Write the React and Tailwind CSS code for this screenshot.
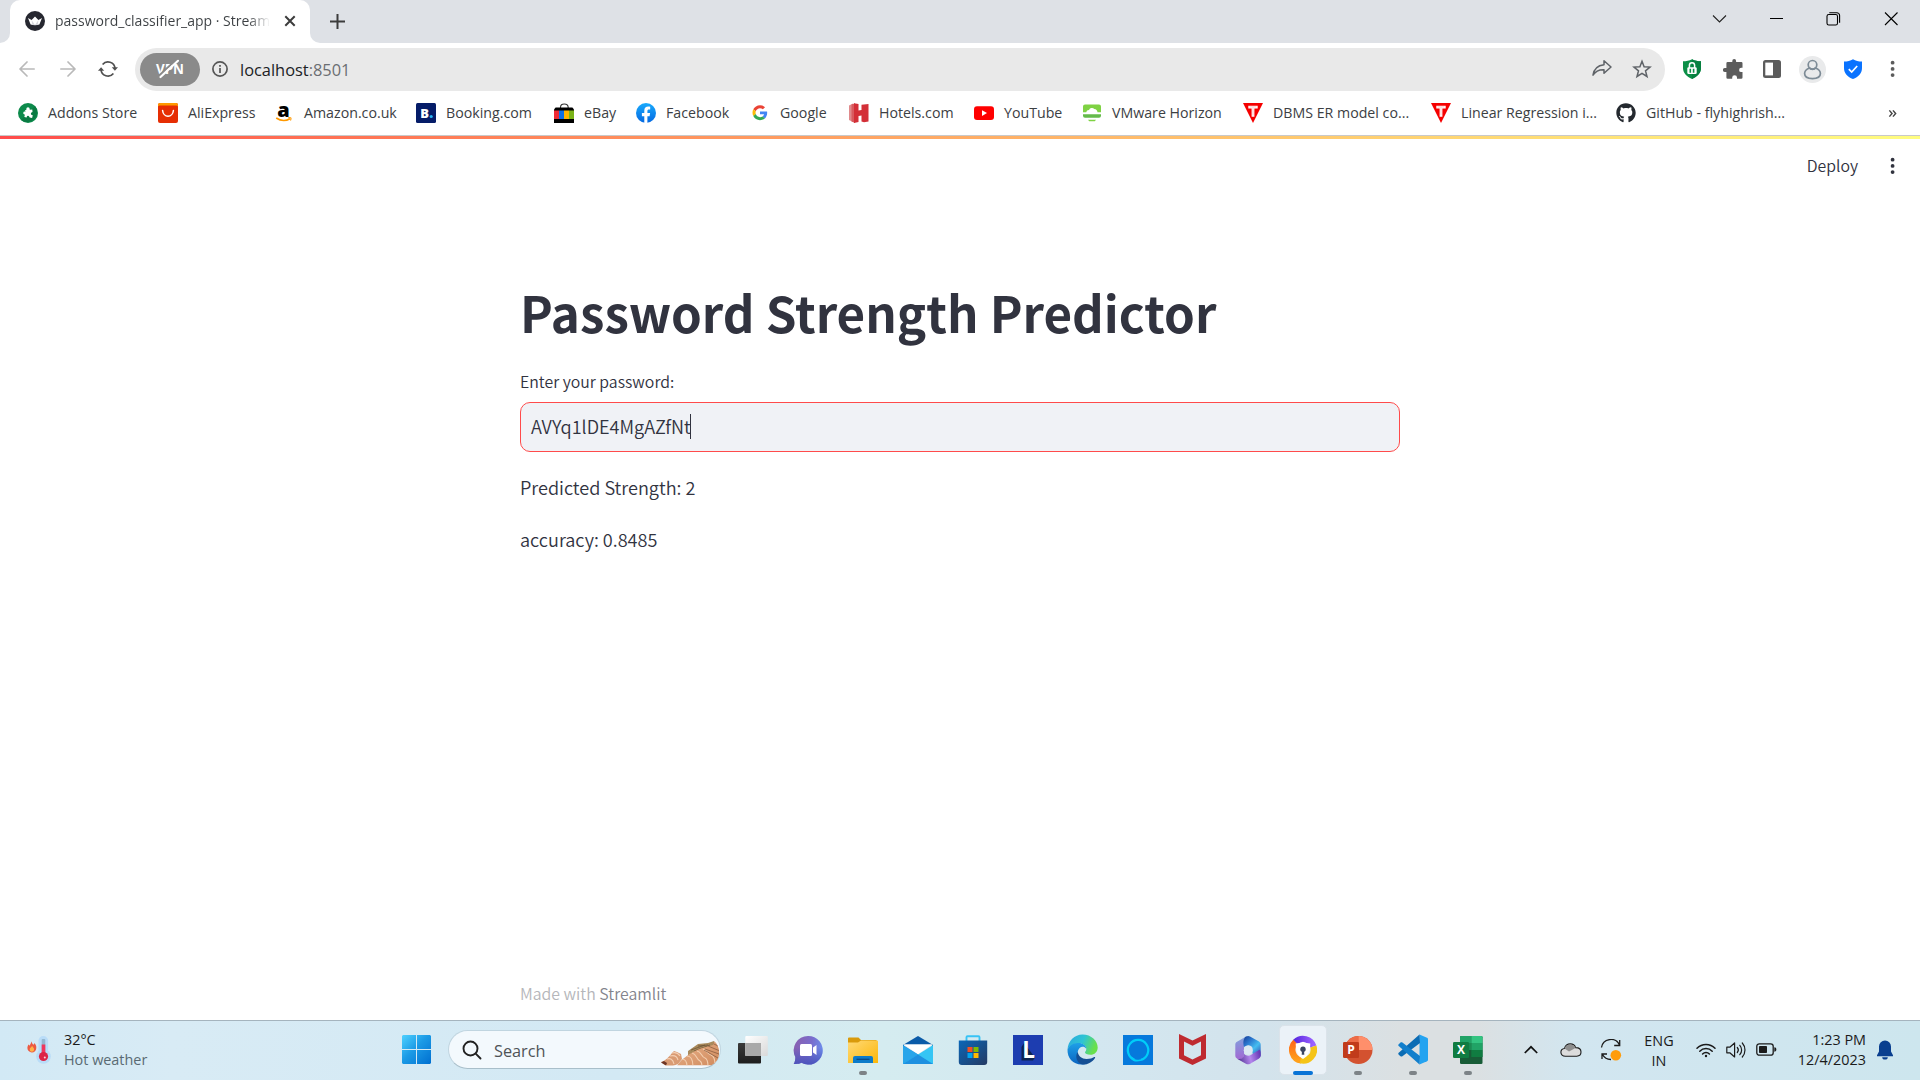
import React from "react";
import { FaGithub } from "react-icons/fa";

/* ---------- browser icons ---------- */

const CrownFavicon = () => (
  <svg className="h-5 w-5 shrink-0" viewBox="0 0 20 20">
    <circle cx="10" cy="10" r="10" fill="#262730" />
    <path d="M3 7l3.6 2L10 5.4 13.4 9 17 7l-2.6 6.6c-2.9.9-5.9.9-8.8 0z" fill="#fff" />
    <path d="M6.6 9 10 13.9 13.4 9l-.6 5.1H7.2z" fill="#d8d8de" />
  </svg>
);

const Arrow = ({ flip }) => (
  <svg className={flip ? "h-4 w-4 rotate-180" : "h-4 w-4"} viewBox="0 0 16 16" fill="none" stroke="#b9b9b9" strokeWidth="1.7" strokeLinecap="round" strokeLinejoin="round">
    <path d="M15.2 8H1.2M8 1 1 8l7 7" />
  </svg>
);

const Reload = () => (
  <svg className="h-5 w-5" viewBox="0 0 20 20" fill="none" stroke="#505050" strokeWidth="1.7">
    <path d="M4.600 5.500A7 7 0 0 1 17 9.500" />
    <path d="M15.400 14.500A7 7 0 0 1 3 10.500" />
    <path d="M13.800 8.300h6.200l-3.100 3.500z" fill="#505050" stroke="none" />
    <path d="M0 11.700h6.200L3.100 8.200z" fill="#505050" stroke="none" />
  </svg>
);

const VpnOff = () => (
  <svg className="h-5 w-[30px] overflow-visible" viewBox="0 0 30 20">
    <text x="15" y="15.400" textAnchor="middle" fontFamily="Open Sans, sans-serif" fontWeight="700" fontSize="14" textLength="28" lengthAdjust="spacingAndGlyphs" fill="#fff">VPN</text>
    <path d="M4.200 16.600 21.500.6" stroke="#8a8a8a" strokeWidth="2" />
    <path d="M5.500 18 23 1.800" stroke="#fff" strokeWidth="2.200" strokeLinecap="round" />
  </svg>
);

const Info = () => (
  <svg className="h-4 w-4" viewBox="0 0 16 16" fill="none" stroke="#555" strokeWidth="1.7">
    <circle cx="8" cy="8" r="7.1" />
    <path d="M8 7v5M8 4v1.8" />
  </svg>
);

const Share = () => (
  <svg className="h-5 w-5" viewBox="0 0 20 20" fill="none" stroke="#5f6368" strokeWidth="1.5" strokeLinejoin="round">
    <path d="M12 1.800 19 8l-7 6.200v-3.500C7 10.500 3.500 12 1 16.200 1.800 10.500 5.300 6.400 12 5.700z" />
  </svg>
);

const Star = () => (
  <svg className="h-5 w-5" viewBox="0 0 20 20" fill="none" stroke="#5f6368" strokeWidth="1.5" strokeLinejoin="miter">
    <path d="M10 2.3l2.1 5.4 5.900.4-4.500 3.700 1.500 5.700-5-3.200-5 3.200 1.500-5.700L2 8.100l5.900-.4z" />
  </svg>
);

const LockShield = () => (
  <svg className="h-5 w-5" viewBox="0 0 20 20">
    <path d="M10 .3c2.700 1.500 5.700 2 9 2V9c0 5-3.700 8.800-9 11C4.700 17.800 1 14 1 9V2.300c3.300 0 6.300-.5 9-2z" fill="#0b8f47" />
    <path d="M10 .3c2.700 1.500 5.700 2 9 2V9c0 5-3.700 8.800-9 11z" fill="#078040" />
    <path d="M7.400 9V6.300a2.600 2.600 0 0 1 5.200 0V9" fill="none" stroke="#fff" strokeWidth="1.500" />
    <rect x="5.300" y="8.300" width="9.400" height="6.700" rx="1.200" fill="#fff" />
    <path d="M7.500 9.700h1.600v4H7.500zM10.800 9.700h1.600v4h-1.600z" fill="#0b8f47" />
  </svg>
);

const Puzzle = () => (
  <svg className="h-5 w-5" viewBox="0 0 20 20" fill="#5c5c5c">
    <path d="M9.300 3V2a1.900 1.900 0 0 1 3.800 0v1h5.200a1.200 1.200 0 0 1 1.200 1.200v4.500h-1.200a2.200 2.200 0 0 0 0 4.400h1.200v5.400a1.300 1.300 0 0 1-1.300 1.300H14v-1.200a2.400 2.400 0 0 0-4.800 0v1.200H4.700a1.300 1.300 0 0 1-1.300-1.300V13.100H2a2.100 2.100 0 0 1 0-4.200h1.400V4.200A1.200 1.200 0 0 1 4.600 3z" />
  </svg>
);

const SidePanel = () => (
  <svg className="h-[18px] w-[18px]" viewBox="0 0 18 18">
    <rect width="18" height="18" rx="2.500" fill="#5c5c5c" />
    <rect x="2.300" y="2.600" width="7.700" height="12.800" fill="#fff" />
  </svg>
);

const Avatar = () => (
  <svg className="h-[27px] w-[27px]" viewBox="0 0 27 27">
    <circle cx="13.500" cy="13.500" r="13.500" fill="#e9eaeb" />
    <g fill="none" stroke="#7d8b96" strokeWidth="1.700">
      <circle cx="13.500" cy="8.800" r="4.300" />
      <path d="M10.300 12C7 13.400 5.600 15.300 5.600 17.600c0 3.200 3.300 5 7.900 5s7.900-1.800 7.900-5c0-2.300-1.400-4.200-4.700-5.600" />
      <path d="M10.300 12c2 1.600 4.400 1.600 6.400 0" />
    </g>
  </svg>
);

const CheckShield = () => (
  <svg className="h-5 w-[18px]" viewBox="0 0 18 20">
    <path d="M9 .2c2.600 1.500 5.600 2.200 9 2.400V9c0 5.300-3.600 9-9 11-5.400-2-9-5.700-9-11V2.600C3.400 2.400 6.400 1.700 9 .2z" fill="#0a73ff" />
    <path d="M4.800 10.200 7.700 13l5.500-6" fill="none" stroke="#fff" strokeWidth="1.700" />
  </svg>
);

const Dots = ({ color = "#5c5c5c" }) => (
  <svg className="h-5 w-5" viewBox="0 0 20 20" fill={color}>
    <circle cx="9.600" cy="3.700" r="1.900" />
    <circle cx="9.600" cy="9.900" r="1.900" />
    <circle cx="9.600" cy="16.100" r="1.900" />
  </svg>
);

/* ---------- bookmark icons ---------- */

const AddonsIcon = () => (
  <svg className="h-5 w-5" viewBox="0 0 20 20">
    <circle cx="10" cy="10" r="10" fill="#0c8a4b" />
    <path d="M3 17 17 3a10 10 0 0 1-14 14z" fill="#0a7a42" />
    <path d="M8.300 7V6a1.700 1.700 0 0 1 3.400 0v.8l2.600-.3.200 2.500-1 .6a1.300 1.300 0 0 0 .2 2.300l1.100.4-.7 2.600-2.400-.5-.6-1a1.200 1.200 0 0 0-2.200.2l-.3 1-2.300-.6.6-2.200-.9-.5a1.500 1.500 0 0 1 .6-2.800h1L7 7z" fill="#fff" />
  </svg>
);
const AliIcon = () => (
  <svg className="h-5 w-5" viewBox="0 0 20 20">
    <rect width="20" height="20" rx="2" fill="#e62e04" />
    <path d="M2 0h16a2 2 0 0 1 2 2v1.600a2 2 0 0 0-2-1H2a2 2 0 0 0-2 1V2a2 2 0 0 1 2-2z" fill="#ff9a00" />
    <path d="M4.600 7.500c.3 3.300 2.600 5.700 5.400 5.700s5.100-2.400 5.400-5.700" fill="none" stroke="#fff" strokeWidth="1.500" strokeLinecap="round" />
  </svg>
);
const AmazonIcon = () => (
  <svg className="h-5 w-5 overflow-visible" viewBox="0 0 20 20">
    <text x="9.600" y="13.800" textAnchor="middle" fontFamily="Open Sans, sans-serif" fontWeight="800" fontSize="20" fill="#000">a</text>
    <path d="M2.200 15c4.500 2.900 9.500 3.100 13.800.7" fill="none" stroke="#f90" strokeWidth="1.600" />
    <path d="M14.200 14.800c2.600-.6 3.600 0 2.300 2.800" fill="none" stroke="#f90" strokeWidth="1.100" />
  </svg>
);
const BookingIcon = () => (
  <svg className="h-5 w-5" viewBox="0 0 20 20">
    <rect width="20" height="20" rx="1.500" fill="#051c68" />
    <text x="4.300" y="14.800" fontFamily="Open Sans, sans-serif" fontWeight="800" fontSize="13" fill="#fff">B</text>
    <circle cx="15.200" cy="13.500" r="1.600" fill="#27b4f2" />
  </svg>
);
const EbayIcon = () => (
  <svg className="h-5 w-5" viewBox="0 0 20 20">
    <path d="M6.500 6V4.500C6.500 1.800 8 1 10.200 1s4 .9 4 3.500V6" fill="none" stroke="#333" strokeWidth="1.100" />
    <path d="M1.600 4.500h16.800L20 6.500V20H0V6.500z" fill="#000" />
    <path d="M0 7.500h5V16H0z" fill="#ee2a35" />
    <path d="M5 7.500h5V16H5z" fill="#0d6fe8" />
    <path d="M10 7.500h5V16h-5z" fill="#ffb400" />
    <path d="M15 7.500h5V16h-5z" fill="#7ab317" />
  </svg>
);
const FacebookIcon = () => (
  <svg className="h-5 w-5" viewBox="0 0 20 20">
    <defs>
      <linearGradient id="fb" x1="0" y1="0" x2="0" y2="1">
        <stop offset="0" stopColor="#19aafc" />
        <stop offset="1" stopColor="#0568e1" />
      </linearGradient>
    </defs>
    <circle cx="10" cy="10" r="10" fill="url(#fb)" />
    <path d="M8.300 20v-6.800H5.900V10h2.400V7.800c0-2.800 1.500-4.200 4-4.200.7 0 1.300.1 1.900.2v2.700h-1.300c-1.100 0-1.500.6-1.500 1.500v2h2.700l-.5 3.200h-2.200V20z" fill="#fff" />
  </svg>
);
const GoogleIcon = () => (
  <svg className="h-5 w-5" viewBox="-8 -7 64 64">
    <path fill="#EA4335" d="M24 9.500c3.540 0 6.710 1.220 9.210 3.600l6.850-6.850C35.900 2.380 30.470 0 24 0 14.620 0 6.510 5.380 2.560 13.220l7.980 6.190C12.430 13.720 17.740 9.500 24 9.500z" />
    <path fill="#4285F4" d="M46.980 24.550c0-1.570-.15-3.090-.38-4.550H24v9.020h12.940c-.58 2.960-2.260 5.480-4.780 7.180l7.730 6c4.510-4.180 7.090-10.360 7.090-17.650z" />
    <path fill="#FBBC05" d="M10.530 28.590c-.48-1.450-.76-2.990-.76-4.590s.27-3.140.76-4.590l-7.980-6.190C.92 16.460 0 20.120 0 24c0 3.880.92 7.540 2.560 10.780l7.970-6.190z" />
    <path fill="#34A853" d="M24 48c6.480 0 11.930-2.130 15.890-5.810l-7.730-6c-2.150 1.450-4.920 2.300-8.160 2.300-6.260 0-11.570-4.220-13.470-9.910l-7.980 6.190C6.510 42.620 14.620 48 24 48z" />
  </svg>
);
const HotelsIcon = () => (
  <svg className="h-5 w-5" viewBox="0 0 20 20">
    <path d="M0 2.500 4 .5v18.500l-4-2z" fill="#e08a8c" />
    <path d="M2.500 1.500 6 .3V20l-3.500-1.500z" fill="#d95a5e" />
    <path d="M5 .3 9.500 1v6.500l3-.5V1.800L19.500 1v17.500l-4.500.7-2.500-.8V12.500L9.500 13v6L5 20z" fill="#d32f37" />
  </svg>
);
const YoutubeIcon = () => (
  <svg className="h-5 w-5" viewBox="0 0 20 20">
    <rect y="3.200" width="20" height="13.800" rx="3" fill="#f00" />
    <path d="M8 7.200v5.800l5-2.900z" fill="#fff" />
  </svg>
);
const HorizonIcon = () => (
  <svg className="h-5 w-5" viewBox="0 0 20 20">
    <path d="M3 1.400h14a2 2 0 0 1 2 2V9.200h-3.500A3.600 3.600 0 0 0 12.300 6a3.300 3.300 0 0 0-5.300.9A2.800 2.800 0 0 0 4.200 9.200H1V3.400a2 2 0 0 1 2-2z" fill="#7fd243" />
    <path d="M1 11.300h18v1.500a2 2 0 0 1-2 2H3a2 2 0 0 1-2-2z" fill="#64ba4a" />
    <path d="M6 16.700h8l-1.200 1.600H7.200z" fill="#7fd243" />
  </svg>
);
const TriangleIcon = () => (
  <svg className="h-5 w-5" viewBox="0 0 20 20">
    <path d="M0 0h20L10 20z" fill="#f50000" />
    <path d="M5.300 2.800h9.400v2.600h-3.300v8.300H8.600V5.400H5.300z" fill="#fff" />
    <path d="M6.600 3.900h6.800M10 4.500v8" stroke="#ff8a8a" strokeWidth=".5" />
  </svg>
);

const bookmarks = [
  ["Addons Store", AddonsIcon],
  ["AliExpress", AliIcon],
  ["Amazon.co.uk", AmazonIcon],
  ["Booking.com", BookingIcon],
  ["eBay", EbayIcon],
  ["Facebook", FacebookIcon],
  ["Google", GoogleIcon],
  ["Hotels.com", HotelsIcon],
  ["YouTube", YoutubeIcon],
  ["VMware Horizon", HorizonIcon],
  ["DBMS ER model co...", TriangleIcon],
  ["Linear Regression i...", TriangleIcon],
  ["GitHub - flyhighrish...", () => <FaGithub className="h-5 w-5 text-[#24292f]" />],
];

/* ---------- taskbar icons ---------- */

const WeatherIcon = () => (
  <svg className="h-[30px] w-[26px]" viewBox="0 0 26 30">
    <rect x="11.500" y="1" width="9.600" height="22" rx="4.800" fill="#b9dcf8" />
    <circle cx="16.500" cy="21.500" r="7.300" fill="#b9dcf8" />
    <rect x="14.700" y="4" width="3.600" height="14" rx="1" fill="#93b6cf" />
    <rect x="14.700" y="9.500" width="3.600" height="10" fill="#f0365c" />
    <circle cx="16.500" cy="21.500" r="4.600" fill="#dc2346" />
    <circle cx="17.800" cy="22.600" r="1" fill="#ffd0d8" />
    <path d="M4.400 6.200c.3 2.200 1.500 2.600 2 3.500.7-.5.800-1 .8-1.700 1.500 1.300 2.300 3 2.100 5A4.400 4.400 0 0 1 4.800 17.400 4.400 4.400 0 0 1 .4 13c0-1.600.7-2.400 1-3.500.5.300.8.700 1 1.200.9-1.200 1.800-2.600 2-4.500z" fill="#ec5a42" />
    <path d="M5.200 10.800c.3 1.400 1.900 2 1.900 3.700a2.200 2.200 0 0 1-4.400 0c0-1.500 1.300-1.800 2.500-3.700z" fill="#ffb347" />
  </svg>
);

const WindowsIcon = () => (
  <svg className="h-[29px] w-[29px]" viewBox="0 0 29 29">
    <defs>
      <linearGradient id="win" gradientUnits="userSpaceOnUse" x1="0" y1="0" x2="29" y2="29">
        <stop offset="0" stopColor="#4fd1ff" />
        <stop offset=".45" stopColor="#1c9be6" />
        <stop offset="1" stopColor="#006fd0" />
      </linearGradient>
    </defs>
    <path fill="url(#win)" d="M1 0h13v14H0V1zM15 0h13l1 1v13H15zM0 15h14v14H1l-1-1zM15 15h14v13l-1 1H15z" />
  </svg>
);

const Shell = () => (
  <svg className="h-[28px] w-[60px]" viewBox="0 0 60 28">
    <defs>
      <clipPath id="pill"><path d="M0 0h42a14 14 0 0 1 17 14 13 13 0 0 1-8 13.500H0z" /></clipPath>
      <linearGradient id="shell" x1="0" y1="0" x2="1" y2="1">
        <stop offset="0" stopColor="#e9b48e" />
        <stop offset="1" stopColor="#d08a5c" />
      </linearGradient>
      <clipPath id="body"><path d="M17 27.500C22 20 34 12 46 9l7-2 2-5 3 3 2 8-1 8-5 6.500z" /></clipPath>
    </defs>
    <g clipPath="url(#pill)">
      <path d="M28 13 38 6l10-1 6-2 2 4-14 6-14 5z" fill="#a88a5c" />
      <path d="M31 12l14-5M34 13l16-6M38 8l10-1" stroke="#6e5638" strokeWidth=".8" />
      <path d="M17 27.500C22 20 34 12 46 9l7-2 2-5 3 3 2 8-1 8-5 6.500z" fill="url(#shell)" />
      <g clipPath="url(#body)" fill="none" stroke="#f3cfb0" strokeWidth="1.100">
        <path d="M22 21c4 0 5 3 5 8M27 18c5 0 6 5 6 11M32 15c5 1 4 6 8 8 2 1 2 3 2 6M37 13c5 1 4 6 8 7 3 1 3 5 3 9M43 11c4 1 4 5 8 6 3 1 4 4 4 10" />
      </g>
      <g clipPath="url(#body)" stroke="#80553a" strokeWidth=".7">
        <path d="M45 11l14 5M48 8l12 5M44 12l14 8M52 5l8 4" />
      </g>
      <path d="M1 24c4-1 8-5 11-9l2-2 3 1 4 2 1 5-4 5-5 2H6z" fill="#d99b73" />
      <path d="M12 15c3-1 6 0 8 3M10 18c4-1 7 0 8 4M7 21c3-1 6 0 7 5" fill="none" stroke="#f4d0b4" strokeWidth="1.100" />
      <path d="M1 24.500 4 23l3 2-1 2.500z" fill="#6d3524" />
    </g>
  </svg>
);

const TaskViewIcon = () => (
  <svg className="h-[30px] w-[30px]" viewBox="0 0 30 30">
    <defs>
      <linearGradient id="tvd" x1="0" y1="0" x2="0" y2="1"><stop offset="0" stopColor="#3a3a3a" /><stop offset="1" stopColor="#1d1d1d" /></linearGradient>
      <linearGradient id="tvl" x1="0" y1="0" x2="1" y2="1"><stop offset="0" stopColor="#fff" /><stop offset="1" stopColor="#d9d9d9" /></linearGradient>
    </defs>
    <rect x="0" y="8" width="23" height="20.500" rx="1" fill="url(#tvd)" />
    <rect x="7.300" y="1" width="22.500" height="20" rx="1" fill="url(#tvl)" />
    <path d="M7.300 8H23v13H7.300z" fill="#a9a9a9" />
  </svg>
);

const ChatIcon = () => (
  <svg className="h-[30px] w-[30px]" viewBox="0 0 30 30">
    <defs>
      <linearGradient id="chat" x1="0" y1=".1" x2="1" y2=".3"><stop offset="0" stopColor="#8a5fae" /><stop offset=".6" stopColor="#7a6ccb" /><stop offset="1" stopColor="#6d8bea" /></linearGradient>
      <linearGradient id="chat2" x1="0" y1="0" x2="0" y2="1"><stop offset=".4" stopColor="#4b53bc" stopOpacity="0" /><stop offset="1" stopColor="#4b53bc" /></linearGradient>
    </defs>
    <path d="M15 1a14.300 14.300 0 1 1-6.500 26.800c-2 1-4.500 1.400-7.800 1.100C2 27 2.300 24.800 2.300 22A14.300 14.300 0 0 1 15 1z" fill="url(#chat)" />
    <path d="M15 1a14.300 14.300 0 1 1-6.500 26.800c-2 1-4.500 1.400-7.800 1.100C2 27 2.300 24.800 2.300 22A14.300 14.300 0 0 1 15 1z" fill="url(#chat2)" />
    <rect x="7" y="9" width="12" height="12" rx="1.500" fill="#fff" />
    <path d="M20 12.500 23.500 10v10L20 17.500z" fill="#fff" />
  </svg>
);

const ExplorerIcon = () => (
  <svg className="h-[30px] w-[30px]" viewBox="0 0 30 30">
    <defs><linearGradient id="fold" x1="0" y1="0" x2="1" y2="1"><stop offset="0" stopColor="#ffd977" /><stop offset="1" stopColor="#fbb708" /></linearGradient></defs>
    <path d="M0 3.500a1 1 0 0 1 1-1h9.500L13 5h15.500v5H0z" fill="#d99a0b" />
    <path d="M0 7.500h10L13 5.500h16a1 1 0 0 1 1 1V28H0z" fill="url(#fold)" />
    <path d="M5 28v-5a2 2 0 0 1 2-2h16a2 2 0 0 1 2 2v5z" fill="#0c7bc9" />
    <path d="M8.500 24.300h13" stroke="#094a85" strokeWidth="1.300" />
  </svg>
);

const MailIcon = () => (
  <svg className="h-[30px] w-[30px]" viewBox="0 0 30 30">
    <path d="M0 10 15 1l15 9v2H0z" fill="#0a5ba8" />
    <path d="M1 9.500h28v10H1z" fill="#efefef" />
    <path d="M1 9.500h28L15 19z" fill="#fff" />
    <path d="M0 10l15 9.500L30 29H0z" fill="#1b94e0" />
    <path d="M30 10 0 29h30z" fill="#35c5f4" />
    <path d="M15 19.500 30 29H0z" fill="#1a86dc" opacity=".85" />
    <path d="M0 10.500v18.500L15 19.500z" fill="#28a5ea" />
  </svg>
);

const StoreIcon = () => (
  <svg className="h-[30px] w-[30px]" viewBox="0 0 30 30">
    <defs><linearGradient id="store" x1="0" y1="0" x2="1" y2="1"><stop offset="0" stopColor="#0a67b8" /><stop offset="1" stopColor="#253a63" /></linearGradient></defs>
    <path d="M8.500 6V2.200a1 1 0 0 1 1-1h11a1 1 0 0 1 1 1V6" fill="none" stroke="#38c3f5" strokeWidth="1.900" />
    <path d="M.8 5.500h28.400V27a3 3 0 0 1-3 3H3.800a3 3 0 0 1-3-3z" fill="url(#store)" />
    <path d="M9.500 12h5v5h-5z" fill="#f25022" />
    <path d="M15.500 12h5v5h-5z" fill="#7fba00" />
    <path d="M9.500 18h5v5h-5z" fill="#00a4ef" />
    <path d="M15.500 18h5v5h-5z" fill="#ffb900" />
  </svg>
);

const LIcon = () => (
  <svg className="h-[30px] w-[30px] overflow-visible" viewBox="0 0 30 30">
    <path d="M0 0h30v30H0z" fill="#1d3db0" />
    <path d="M11 8 8.500 12v13.500H20l2-3z" fill="#0d2350" />
    <text x="9.300" y="22.500" fontFamily="Open Sans, sans-serif" fontWeight="700" fontSize="22.500" fill="#fff">L</text>
  </svg>
);

const EdgeIcon = () => (
  <svg className="h-[31px] w-[31px]" viewBox="0 0 31 31">
    <defs>
      <linearGradient id="e1" x1="0" y1="0" x2="1" y2=".3"><stop offset="0" stopColor="#2aa8e0" /><stop offset=".55" stopColor="#2fc4d4" /><stop offset="1" stopColor="#69e04c" /></linearGradient>
      <linearGradient id="e2" x1="0" y1="0" x2="0" y2="1"><stop offset="0" stopColor="#1ea0e8" /><stop offset="1" stopColor="#0b64c0" /></linearGradient>
    </defs>
    <path d="M.5 15.500C1 7 7.500.5 15.500.5 24.500.5 30.700 7 30.700 13.500c0 4.500-3.200 7.300-7.200 7.300-3.500 0-5.500-1.200-5.500-2.300 0-.8 1.300-1.300 1.300-3.400 0-3-2.800-5.600-6.500-5.600C6.500 9.500 2.500 12 .5 15.500z" fill="url(#e1)" />
    <path d="M.5 15.500C2.500 11 7 9 11.500 9c4.500 0 7.600 2.600 7.800 5.800-1-1.600-2.600-2.200-4-2-3 .5-5 3.500-4.500 7.500.6 4.700 5 8.200 9.200 8.600-1.600 1-3.300 1.600-5.500 1.600C6 30.500.2 24 .5 15.500z" fill="url(#e2)" />
    <path d="M10.800 18c.5 4 4 7 8.700 7 3.500 0 6-1 7.700-2 .8-.3 1.200.3.8.9-2.500 4-7 6.600-12 6.600-3.500-.2-6.700-4-6.700-8 0-1.700.5-3.300 1.500-4.500z" fill="#154f94" />
  </svg>
);

const AlexaIcon = () => (
  <svg className="h-[30px] w-[30px]" viewBox="0 0 30 30">
    <path d="M0 0h30v30H0z" fill="#0679dc" />
    <path d="M11.500 24.700A10.200 10.200 0 1 1 18 24.900" fill="none" stroke="#00cdf8" strokeWidth="2.200" />
    <path d="M8 22.500c1.800 2.800 5 4.100 10 2.500" fill="none" stroke="#00cdf8" strokeWidth="1.800" />
  </svg>
);

const McAfeeIcon = () => (
  <svg className="h-[31px] w-[27px]" viewBox="0 0 27 31">
    <path d="M0 0 13.500 6.500 27 0v24.500L13.500 31 0 24.500zM5 7.500v13.800l8.500 4.200 8.500-4.200V7.500l-8.500 4.300z" fill="#bf2a30" fillRule="evenodd" />
  </svg>
);

const M365Icon = () => (
  <svg className="h-[30px] w-[26px]" viewBox="0 0 26 30">
    <defs>
      <linearGradient id="m1" x1="0" y1="0" x2="0" y2="1"><stop offset="0" stopColor="#7fa3dc" /><stop offset="1" stopColor="#a268d4" /></linearGradient>
      <linearGradient id="m2" gradientUnits="userSpaceOnUse" x1="9" y1="4" x2="25" y2="20"><stop offset="0" stopColor="#1d4fa8" /><stop offset=".25" stopColor="#2c78cf" /><stop offset=".6" stopColor="#45bdf0" /><stop offset="1" stopColor="#3355b4" /></linearGradient>
      <linearGradient id="m3" gradientUnits="userSpaceOnUse" x1="3" y1="26" x2="25" y2="20"><stop offset="0" stopColor="#4f3292" /><stop offset=".55" stopColor="#b487ec" /><stop offset="1" stopColor="#6a3ab8" /></linearGradient>
    </defs>
    <path d="M11.500 1.300 2 6.800C.8 7.500.3 8.500.3 9.600v11c0 1.500.7 2.500 2 3.200 1.500.7 3.500.7 5-.3 1.200-.8 1.700-2 1.700-3.500v-8.500c0-1.500.8-2.700 2-3.500z" fill="url(#m1)" />
    <path d="M11 1.500c1.500-.7 2.800-.7 4 0l9 5c1.200.8 1.700 2 1.700 3.200v10c0 1-.3 2-1.200 2.700L17.500 18.500v-5c0-1.300-.6-2.100-1.700-2.600-1.600-.9-3.300-.9-5 0L9 12C8 8 8 3.500 11 1.500z" fill="url(#m2)" />
    <path d="M2 23.700c3 1 6 0 7-3.200v-1.700c1.500 1.400 2.700 1.900 4.200 1.900 1 0 2-.3 3-.9l8.300-5c1.200 1 1.200 2.500 1.200 5.500 0 1.500-.7 2.700-2 3.400l-8.500 5c-1.400.8-2.800.8-4.300 0z" fill="url(#m3)" />
    <circle cx="13.200" cy="15.200" r="4.400" fill="#dbe8f2" />
  </svg>
);

const AvastIcon = () => (
  <svg className="h-[29px] w-[28px]" viewBox="0 0 28 29">
    <defs>
      <linearGradient id="avp" x1="0" y1="0" x2="1" y2="0"><stop offset="0" stopColor="#5b2be0" /><stop offset="1" stopColor="#9b62ff" /></linearGradient>
      <linearGradient id="avo" x1="0" y1="0" x2="0" y2="1"><stop offset="0" stopColor="#ff6a1a" /><stop offset="1" stopColor="#ffa01c" /></linearGradient>
    </defs>
    <g fill="none" strokeWidth="6.500">
      <path d="M12.500 25.400A10.800 10.800 0 0 1 6.700 6.800" stroke="url(#avo)" />
      <path d="M6.500 7A10.800 10.800 0 0 1 24.300 11.500" stroke="url(#avp)" />
      <path d="M24.300 11.400A10.800 10.800 0 0 1 11.500 25.200" stroke="#f5c417" />
    </g>
    <path d="M14 6.800c2.500 1.200 5 1.600 7.300 1.600 0 7-2 12.600-7.300 15.600-5.300-3-7.300-8.600-7.300-15.600 2.300 0 4.800-.4 7.300-1.600z" fill="#fff" />
    <circle cx="14" cy="14.200" r="2.700" fill="#3b4663" />
    <path d="M13 15h2l.3 4.700h-2.600z" fill="#3b4663" />
  </svg>
);

const PowerPointIcon = () => (
  <svg className="h-[30px] w-[30px]" viewBox="0 0 30 30">
    <circle cx="15.500" cy="15" r="14" fill="#d35230" />
    <path d="M15.500 15V1A14 14 0 0 0 1.500 15z" fill="#ed6c47" />
    <path d="M15.500 1a14 14 0 0 1 14 14h-14z" fill="#ff8f6b" />
    <rect x="0" y="7" width="16" height="16" rx="1.300" fill="#c13b1b" />
    <text x="8" y="19.300" textAnchor="middle" fontFamily="Open Sans, sans-serif" fontWeight="700" fontSize="12" fill="#fff">P</text>
  </svg>
);

const VSCodeIcon = () => (
  <svg className="h-[31px] w-[30px]" viewBox="0 0 30 31">
    <path d="M21.500.5 29 3.700c.7.300 1 .8 1 1.500v20.600c0 .7-.3 1.200-1 1.500l-7.500 3.200z" fill="#24a3f0" />
    <path d="M21.500.5 1 18.500c-1 .8-1 1.600 0 2.400l1.500 1.300c.6.500 1.200.5 1.900.1L22 9z" fill="#0b6cb4" />
    <path d="M21.500 30.500 1 12.300c-1-.8-1-1.600 0-2.400l1.500-1.300c.6-.5 1.200-.5 1.900-.1L22 22z" fill="#127fcc" />
  </svg>
);

const ExcelIcon = () => (
  <svg className="h-[30px] w-[30px]" viewBox="0 0 30 30">
    <rect x="7" y="1" width="22.500" height="28" rx="1.300" fill="#185c37" />
    <path d="M7 2.300A1.300 1.300 0 0 1 8.300 1h10v7H7z" fill="#21a366" />
    <path d="M18.300 1h10a1.300 1.300 0 0 1 1.300 1.300V8H18.300z" fill="#33c481" />
    <path d="M7 8h11.300v7H7z" fill="#1b8a52" />
    <path d="M18.300 8h11.300v7H18.300z" fill="#21a366" />
    <path d="M18.300 15h11.300v7H18.300z" fill="#107c41" />
    <rect x="0" y="7" width="16" height="16" rx="1.300" fill="#107c41" />
    <text x="8" y="19.300" textAnchor="middle" fontFamily="Open Sans, sans-serif" fontWeight="700" fontSize="12" fill="#fff">X</text>
  </svg>
);

const apps = [
  { Icon: TaskViewIcon },
  { Icon: ChatIcon },
  { Icon: ExplorerIcon, running: true },
  { Icon: MailIcon },
  { Icon: StoreIcon },
  { Icon: LIcon },
  { Icon: EdgeIcon },
  { Icon: AlexaIcon },
  { Icon: McAfeeIcon },
  { Icon: M365Icon },
  { Icon: AvastIcon, active: true },
  { Icon: PowerPointIcon, running: true },
  { Icon: VSCodeIcon, running: true },
  { Icon: ExcelIcon, running: true },
];

/* ---------- sections ---------- */

function TabStrip() {
  return (
    <div className="flex h-[43px] bg-[#dee1e6]">
      <div className="h-[43px] w-2.5 bg-white">
        <div className="h-full w-full rounded-br-[10px] bg-[#dee1e6]" />
      </div>
      <div className="flex w-[300px] items-center rounded-t-[10px] bg-white pr-[11px] pb-px pl-[15px]">
        <CrownFavicon />
        <div className="ml-[10px] w-[215px] overflow-hidden bg-gradient-to-r from-[#3c4043] from-90% to-transparent to-100% bg-clip-text text-[14px] leading-5 whitespace-nowrap text-transparent">
          password_classifier_app · Streamlit
        </div>
        <svg className="ml-auto h-[18px] w-[18px]" viewBox="0 0 18 18" stroke="#3c3c3c" strokeWidth="2">
          <path d="M4.300 4.300l9.400 9.400M13.700 4.300l-9.400 9.400" />
        </svg>
      </div>
      <div className="w-2.5 bg-white">
        <div className="h-full w-full rounded-bl-[10px] bg-[#dee1e6]" />
      </div>
      <svg className="mt-[14px] ml-[10px] h-[15px] w-[15px]" viewBox="0 0 15 15" stroke="#3c3c3c" strokeWidth="2">
        <path d="M7.500 0v15M0 7.500h15" />
      </svg>
      <div className="mr-[9px] ml-auto flex h-[37px] items-center">
        <svg className="w-[57px]" height="14" viewBox="0 0 57 14" fill="none" stroke="#222" strokeWidth="1.100">
          <path d="M15 3.500 21.500 10 28 3.500" />
        </svg>
        <svg className="w-[57px]" height="14" viewBox="0 0 57 14" fill="none" stroke="#000">
          <path d="M15 6.500h13" />
        </svg>
        <svg className="w-[57px]" height="14" viewBox="0 0 57 14" fill="none" stroke="#000" strokeWidth="1.100">
          <rect x="15" y="2.500" width="10.500" height="10.500" rx="1.800" />
          <path d="M17.300.8h7.500a2.800 2.800 0 0 1 2.800 2.800v7.200" />
        </svg>
        <svg className="w-[42px]" height="14" viewBox="0 0 42 14" fill="none" stroke="#000" strokeWidth="1.100">
          <path d="M16 .5 28.500 13M28.500.5 16 13" />
        </svg>
      </div>
    </div>
  );
}

function Toolbar() {
  return (
    <div className="flex h-[51px] items-center pt-[1px] pr-[17px] pl-[19px]">
      <Arrow />
      <div className="ml-[25px]"><Arrow flip /></div>
      <div className="ml-[22px]"><Reload /></div>
      <div className="ml-[17px] flex h-[43px] w-[1530px] items-center rounded-full bg-[#e9e9e9] pr-[13px] pl-[5px]">
        <div className="flex h-[33px] w-[60px] items-center justify-center rounded-full bg-[#8a8a8a]"><VpnOff /></div>
        <div className="ml-3"><Info /></div>
        <div className="mt-px ml-[12px] text-[16.400px] leading-6 text-[#202124]">localhost<span className="text-[#6b6e72]">:8501</span></div>
        <div className="ml-auto flex items-center gap-5"><Share /><Star /></div>
      </div>
      <div className="ml-[17px]"><LockShield /></div>
      <div className="ml-[21px]"><Puzzle /></div>
      <div className="ml-[20px]"><SidePanel /></div>
      <div className="ml-[18px]"><Avatar /></div>
      <div className="ml-[18px]"><CheckShield /></div>
      <div className="ml-auto"><Dots /></div>
    </div>
  );
}

function Bookmarks() {
  return (
    <div className="flex h-[41px] items-center pr-[23px] pb-[3px] pl-[18px]">
      <div className="grid grow grid-cols-[140px_116px_142px_138px_82px_114px_99px_125px_108px_161px_188px_185px_1fr]">
        {bookmarks.map(([label, Icon], i) => (
          <div key={i} className="flex items-center gap-2.5 text-[14.200px] leading-5 whitespace-nowrap text-[#3c4043]">
            <Icon />
            {label}
          </div>
        ))}
      </div>
      <svg className="h-[9px] w-[9px]" viewBox="0 0 10 10" fill="none" stroke="#444" strokeWidth="1.600">
        <path d="M1.500 1.500 4.500 5l-3 3.500M5.500 1.500 8.500 5l-3 3.500" />
      </svg>
    </div>
  );
}

function StreamlitPage() {
  return (
    <main className="flex h-[885px] flex-col border-t border-[#c9c9c9] bg-white font-['Noto_Sans_CJK_SC',sans-serif] font-[350] text-[#31333f]">
      <div className="h-[3px] shrink-0 bg-gradient-to-r from-[#ff4b4b] to-[#fffd80]" />
      <div className="flex h-[54px] shrink-0 items-center justify-end pr-[17px]">
        <span className="text-[15.850px] leading-6">Deploy</span>
        <div className="ml-[25px]"><Dots color="#31333f" /></div>
      </div>
      <div className="mx-auto flex w-[880px] grow flex-col pt-[86px] pb-[14px]">
        <h1 className="text-[49.300px] leading-[66px] font-bold">Password Strength Predictor</h1>
        <label className="mt-[25px] text-[15.850px] leading-6">Enter your password:</label>
        <div className="mt-[8px] flex h-[50px] items-center rounded-[10px] border border-[#ff4b4b] bg-[#f0f2f6] pb-0.5 pl-[10px] text-[18.100px] leading-6">
          AVYq1lDE4MgAZfNt
          <span className="-ml-px h-[25px] w-px bg-[#31333f]" />
        </div>
        <p className="mt-[23px] text-[18.100px] leading-6">Predicted Strength: 2</p>
        <p className="mt-[28px] text-[18.100px] leading-6">accuracy: 0.8485</p>
        <footer className="mt-auto text-[15.850px] leading-6 text-[#b5b6ba]">
          Made with <span className="text-[#83848c]">Streamlit</span>
        </footer>
      </div>
    </main>
  );
}

function Taskbar() {
  return (
    <div className="flex h-[60px] items-center border-t border-[#a5b4be] bg-[linear-gradient(90deg,#d2e9f5_0%,#d8ebf5_9%,#d3e9f4_32%,#d5ecf0_46%,#d3e7f0_57%,#d3e3ec_66%,#dbe0e2_73%,#dbe0e2_77%,#d2e6f0_82%,#cde6ee_100%)] pb-0.5 text-[14.400px] leading-5 text-[#1b1b1b]">
      <div className="flex w-[389px] items-center pl-[27px]">
        <WeatherIcon />
        <div className="ml-[11px]">
          <div>32°C</div>
          <div className="text-[#5a6a73]">Hot weather</div>
        </div>
      </div>
      <div className="flex w-[59px] pl-[13px]"><WindowsIcon /></div>
      <div className="mr-[5px] flex h-[39px] w-[273px] items-center rounded-full border border-[#c0d5e0] border-b-[#a9bfca] bg-[#f3f9fd] pl-[13px]">
        <svg className="h-5 w-5" viewBox="0 0 20 20" fill="none" stroke="#222" strokeWidth="1.900" strokeLinecap="round">
          <circle cx="8.500" cy="8.500" r="7" />
          <path d="M13.700 13.700 18.500 18.500" />
        </svg>
        <span className="mt-0.5 ml-[12px] text-[16.300px] leading-6 text-[#4f5357]">Search</span>
        <div className="mt-1 ml-auto"><Shell /></div>
      </div>
      {apps.map(({ Icon, running, active }, i) => (
        <div key={i} className="relative -left-px flex h-[50px] w-[55px] items-center justify-center">
          <div className={active ? "flex h-[50px] w-[48px] items-center justify-center rounded-[5px] border border-[#dbe3ea] bg-[#ebf2f8]" : "flex"}>
            <Icon />
          </div>
          {running && <span className="absolute bottom-0 left-[24px] h-1 w-2 rounded-full bg-[#7d8387]" />}
          {active && <span className="absolute bottom-0 left-[18px] h-1 w-5 rounded-full bg-[#0a74d6]" />}
        </div>
      ))}
      <div className="flex grow items-center">
        <svg className="ml-[28px] h-[9px] w-[14px]" viewBox="0 0 14 9" fill="none" stroke="#111" strokeWidth="1.700">
          <path d="M.8 8 7 1.800 13.200 8" />
        </svg>
        <svg className="ml-[22px] h-[14px] w-[22px]" viewBox="0 0 22 14">
          <path d="M5.500 13.200C2.500 13.200.9 11.500.9 9.300c0-1.900 1.500-3.600 3.600-3.800C5.300 2.700 7.500.9 10.300.9c2.500 0 4.500 1.300 5.400 3.700 3 0 5.300 1.700 5.300 4.500 0 2.400-1.700 4.100-4.200 4.100z" fill="#dcdcdc" stroke="#1c1c1c" strokeWidth="1.100" />
          <path d="M4.500 5.500C5.300 2.700 7.500 1.400 10.300 1.400c2.500 0 4.400 1.100 5.200 3.500L9 8.500z" fill="#8e8e8e" />
        </svg>
        <svg className="ml-[18px] h-[22px] w-[22px]" viewBox="0 0 22 22" fill="none" stroke="#1b1b1b" strokeWidth="1.300">
          <path d="M1.500 8.500A9.500 9.500 0 0 1 19.500 6M19.700 1v5.500h-5.500M2 20v-5h5M2.500 15.500A9.500 9.500 0 0 0 11 20.500" />
          <circle cx="15.800" cy="16.300" r="5.300" fill="#ff9c0a" stroke="none" />
        </svg>
        <div className="ml-[20px] w-[34px] pt-0.5 text-center">ENG<br />IN</div>
        <svg className="ml-[20px] h-4 w-5" viewBox="0 0 20 16" fill="none" stroke="#1b1b1b" strokeWidth="1.500" strokeLinecap="round">
          <path d="M1 6.300a12.600 12.600 0 0 1 18 0M3.800 9.200a8.700 8.700 0 0 1 12.400 0M6.600 12a4.800 4.800 0 0 1 6.800 0" />
          <circle cx="10" cy="14" r="1.200" fill="#1b1b1b" stroke="none" />
        </svg>
        <svg className="ml-[10px] h-[18px] w-5" viewBox="0 0 20 18" fill="none" stroke="#1b1b1b" strokeWidth="1.200" strokeLinecap="round" strokeLinejoin="round">
          <path d="M.8 6.200h3L8.600 2v14l-4.800-4.200h-3z" />
          <path d="M11.300 6.500a3.800 3.800 0 0 1 0 5M13.800 4.300a7 7 0 0 1 0 9.400M16.300 2a10.500 10.500 0 0 1 0 14" />
        </svg>
        <svg className="ml-[10px] h-[13px] w-[21px]" viewBox="0 0 21 13">
          <rect x=".8" y=".8" width="16.400" height="11.400" rx="2.500" fill="none" stroke="#1b1b1b" strokeWidth="1.300" />
          <rect x="3" y="3" width="8" height="7" rx=".8" fill="#1b1b1b" />
          <path d="M18.300 4.300c1.300 0 2 .9 2 2.200s-.7 2.200-2 2.200z" fill="#1b1b1b" />
        </svg>
        <div className="ml-auto text-right">1:23 PM<br />12/4/2023</div>
        <svg className="mr-[27px] ml-[11px] h-5 w-4" viewBox="0 0 16 20" fill="#0a3f8f">
          <path d="M8 .5a6 6 0 0 1 6 6v5l2 3.700v1H0v-1l2-3.700v-5a6 6 0 0 1 6-6zM5.200 17.200h5.600a2.800 2.300 0 0 1-5.600 0z" />
        </svg>
      </div>
    </div>
  );
}

export default function App() {
  return (
    <div className="flex h-[1080px] w-[1920px] flex-col overflow-hidden bg-white font-['Open_Sans',sans-serif]">
      <TabStrip />
      <Toolbar />
      <Bookmarks />
      <StreamlitPage />
      <Taskbar />
    </div>
  );
}
